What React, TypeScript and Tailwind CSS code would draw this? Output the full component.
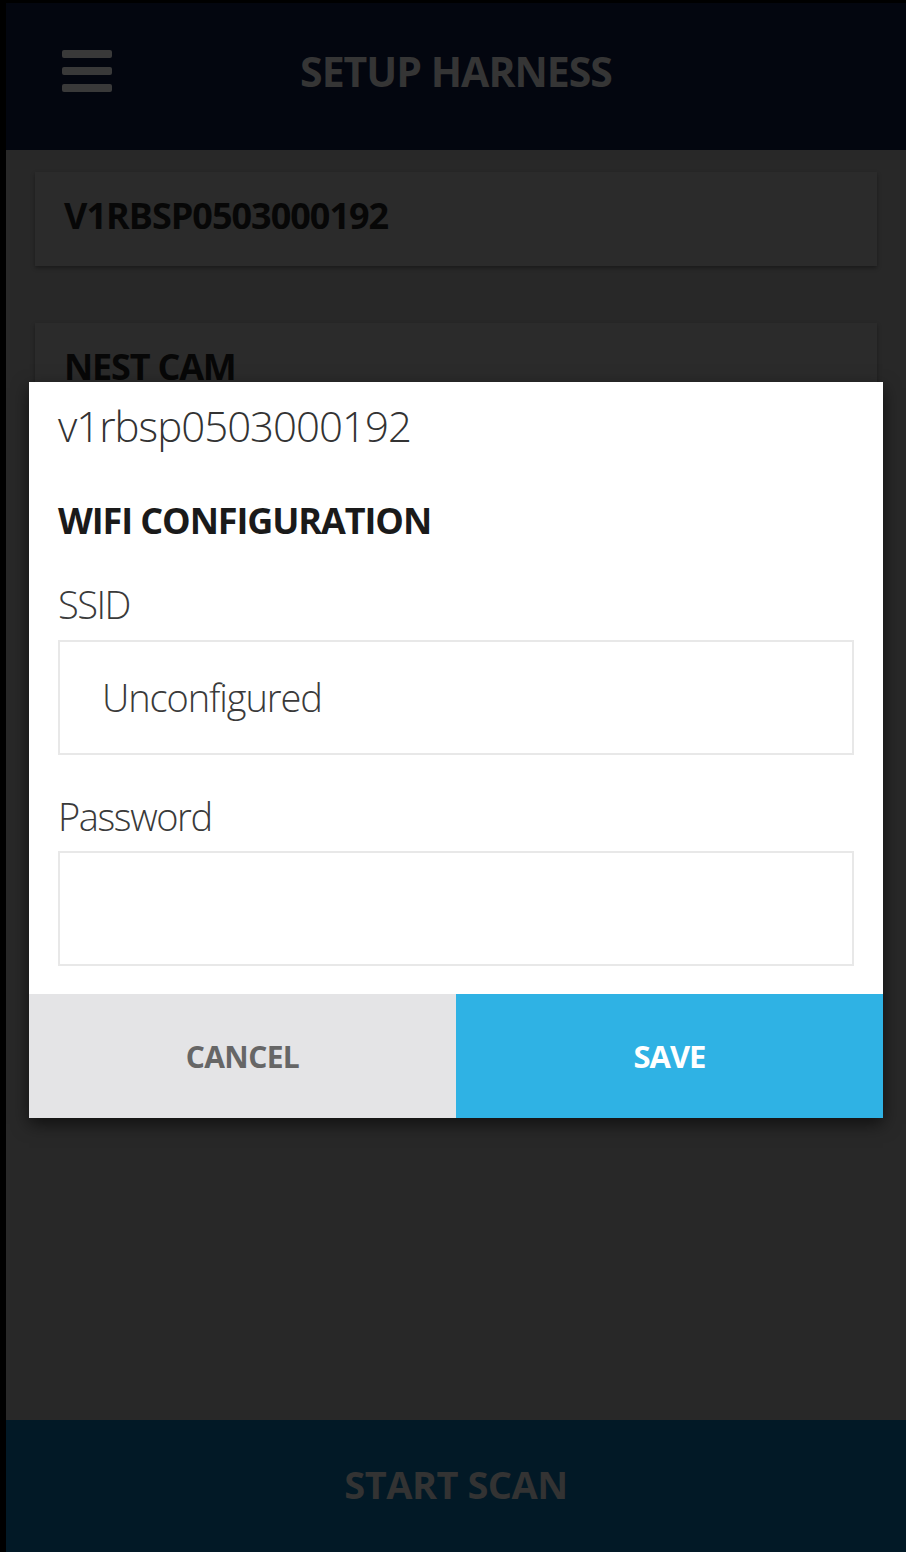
import React from "react";

const font = { fontFamily: '"Open Sans", "Liberation Sans", sans-serif' };

export default function App() {
  return (
    <div className="flex h-[1552px] w-[906px] bg-black" style={font}>
      <div className="w-[6px] shrink-0 bg-black" />
      <div className="relative flex flex-1 flex-col pt-[3px]">
        <header className="relative flex h-[147px] shrink-0 items-center justify-center bg-[#03060f]">
          <div className="absolute left-[56px] top-[47px] flex flex-col gap-[9px]">
            <span className="block h-[8px] w-[50px] rounded-[2px] bg-[#393939]" />
            <span className="block h-[8px] w-[50px] rounded-[2px] bg-[#393939]" />
            <span className="block h-[8px] w-[50px] rounded-[2px] bg-[#393939]" />
          </div>
          <h1 className="mb-[10px] text-[41px] font-bold tracking-[-1px] text-[#353535]">
            SETUP HARNESS
          </h1>
        </header>

        <main className="flex flex-1 flex-col gap-[57px] bg-[#282828] px-[29px] pt-[22px]">
          <div className="flex h-[94px] items-center bg-[#2b2b2b] px-[29px] pb-[6px] shadow-[0_2px_4px_rgba(0,0,0,0.35)]">
            <span className="text-[36px] font-bold tracking-[-1px] text-[#070707]">V1RBSP0503000192</span>
          </div>
          <div className="flex h-[94px] items-center bg-[#2b2b2b] px-[29px] pb-[6px] shadow-[0_2px_4px_rgba(0,0,0,0.35)]">
            <span className="text-[36px] font-bold tracking-[-1.2px] text-[#070707]">NEST CAM</span>
          </div>
        </main>

        <footer className="flex h-[132px] shrink-0 items-center justify-center bg-[#021926]">
          <span className="mb-[4px] text-[38px] font-bold tracking-[-0.5px] text-[#333333]">START SCAN</span>
        </footer>

        <div className="absolute left-[23px] top-[382px] flex w-[854px] flex-col bg-white shadow-[0_6px_16px_rgba(0,0,0,0.6)]">
          <div className="flex flex-col px-[29px] pb-[28px] pt-[14px]">
            <div className="text-[42px] font-light leading-[60px] tracking-[-1px] text-[#333333]">v1rbsp0503000192</div>
            <div className="mt-[45px] text-[36px] font-bold leading-[40px] tracking-[-1.1px] text-[#1a1a1a]">WIFI CONFIGURATION</div>
            <div className="mt-[41px] text-[38px] font-light leading-[44px] tracking-[-1.5px] text-[#3a3a3a]">SSID</div>
            <div className="mt-[14px] flex h-[115px] items-center border-2 border-[#e8e8e8] pl-[42px]">
              <span className="text-[38px] font-light tracking-[-1.1px] text-[#3a3a3a]">Unconfigured</span>
            </div>
            <div className="mt-[39px] text-[38px] font-light leading-[44px] tracking-[-1.4px] text-[#3a3a3a]">Password</div>
            <div className="mt-[13px] h-[115px] border-2 border-[#e8e8e8]" />
          </div>
          <div className="flex h-[124px]">
            <button className="flex flex-1 items-center justify-center bg-[#e4e4e6] text-[30px] font-bold tracking-[-0.6px] text-[#666666]">
              CANCEL
            </button>
            <button className="flex flex-1 items-center justify-center bg-[#2fb2e4] text-[31px] font-bold tracking-[-1px] text-white">
              SAVE
            </button>
          </div>
        </div>
      </div>
    </div>
  );
}
